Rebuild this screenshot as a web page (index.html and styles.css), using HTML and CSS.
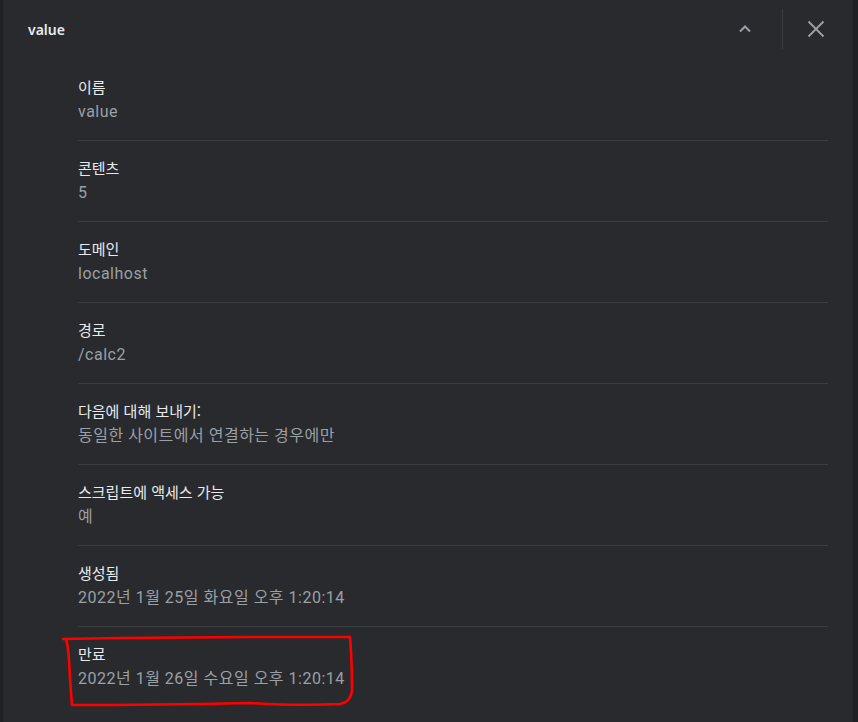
FILE: index.html
```html
<!DOCTYPE html>
<html lang="ko">
<head>
<meta charset="utf-8">
<link rel="stylesheet" href="styles.css">
</head>
<body>
<div class="frame">
  <div class="edge-left"></div>
  <main class="panel">
    <header class="head">
      <div class="title">value</div>
      <button class="icon-btn" aria-label="collapse">
        <svg width="16" height="16" viewBox="0 0 16 16"><path d="M3 10.5 L8 5.5 L13 10.5" fill="none" stroke="#9aa0a6" stroke-width="2"/></svg>
      </button>
      <div class="divider"></div>
      <button class="icon-btn" aria-label="close">
        <svg width="18" height="18" viewBox="0 0 18 18"><path d="M1.5 1.5 L16.5 16.5 M16.5 1.5 L1.5 16.5" fill="none" stroke="#9aa0a6" stroke-width="1.8"/></svg>
      </button>
    </header>
    <div class="list">
      <div class="row"><div class="label">이름</div><div class="value">value</div></div>
      <div class="row"><div class="label">콘텐츠</div><div class="value">5</div></div>
      <div class="row"><div class="label">도메인</div><div class="value">localhost</div></div>
      <div class="row"><div class="label">경로</div><div class="value">/calc2</div></div>
      <div class="row"><div class="label">다음에 대해 보내기:</div><div class="value">동일한 사이트에서 연결하는 경우에만</div></div>
      <div class="row"><div class="label">스크립트에 액세스 가능</div><div class="value">예</div></div>
      <div class="row"><div class="label">생성됨</div><div class="value">2022년 1월 25일 화요일 오후 1:20:14</div></div>
      <div class="row last"><div class="label">만료</div><div class="value">2022년 1월 26일 수요일 오후 1:20:14</div></div>
    </div>
  </main>
  <div class="edge-right"></div>
  <svg class="mark" width="858" height="722" viewBox="0 0 858 722">
    <path d="M63,639 L120,638 L250,637 L350,637 Q352,660 352,690 Q351,702 340,704 Q300,706 250,703 Q150,705 72,705 Q70,680 69,660 Q68,645 66,639" fill="none" stroke="#ff0000" stroke-width="2.6" stroke-linejoin="round" stroke-linecap="round"/>
  </svg>
</div>
</body>
</html>
```

FILE: styles.css
```css
html, body {
  margin: 0;
  padding: 0;
  background: #292a2d;
}
body {
  width: 858px;
  height: 722px;
  overflow: hidden;
  font-family: Roboto, "Noto Sans CJK KR", sans-serif;
}
.frame {
  position: relative;
  display: flex;
  height: 722px;
}
.edge-left {
  width: 3px;
  background: #202124;
}
.edge-right {
  width: 5px;
  background: #202124;
}
.panel {
  flex: 1;
  background: #292a2d;
}
.head {
  height: 58px;
  display: flex;
  align-items: center;
  padding: 0 21px 0 25px;
}
.title {
  flex: 1;
  color: #e8eaed;
  font-family: "Noto Sans", "Noto Sans CJK KR", sans-serif;
  font-weight: 600;
  font-size: 14px;
}
.icon-btn {
  width: 32px;
  height: 32px;
  padding: 0;
  border: 0;
  background: transparent;
  display: flex;
  align-items: center;
  justify-content: center;
}
.divider {
  width: 1px;
  height: 40px;
  background: #3c3d40;
  margin: 0 17px 0 21px;
}
.list {
  padding: 2px 25px 0 75px;
}
.row {
  padding: 17px 0 18px;
  border-bottom: 1px solid #3c3d40;
  display: flex;
  flex-direction: column;
  gap: 5px;
}
.row.last {
  border-bottom: 0;
}
.label {
  color: #e8eaed;
  font-size: 15px;
  line-height: 20px;
  font-family: "Noto Sans CJK KR", sans-serif;
}
.value {
  color: #9aa0a6;
  font-size: 16px;
  line-height: 20px;
  letter-spacing: 0.5px;
  font-family: Roboto, "Noto Sans CJK KR", sans-serif;
}
.mark {
  position: absolute;
  left: 0;
  top: 0;
  pointer-events: none;
}
```
